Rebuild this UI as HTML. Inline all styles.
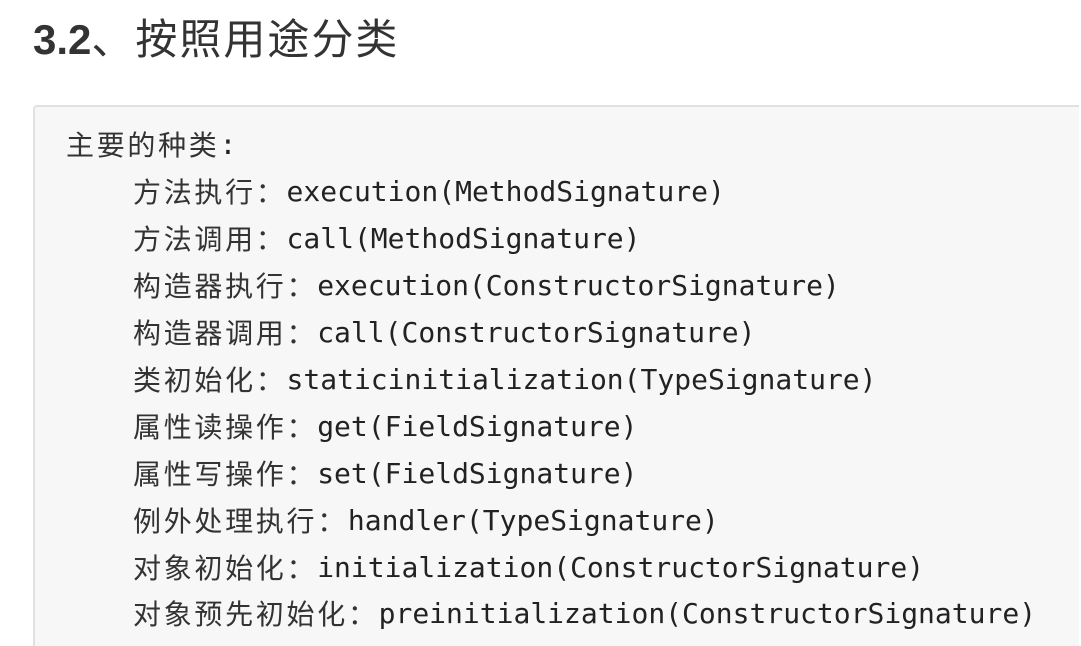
<html><head><style>
html,body{margin:0;width:1081px;height:646px;background:#fff;overflow:hidden;color:#333;font-family:"Liberation Sans","Noto Sans CJK SC",sans-serif}
h1{position:absolute;left:33px;top:14px;margin:0;font-size:42px;font-weight:normal;line-height:52px;white-space:nowrap}
h1 b{font-weight:bold;font-family:"Liberation Sans",sans-serif}
h1 span{letter-spacing:2px}
.box{position:absolute;left:33px;top:105px;width:1044px;height:539px;background:#f7f7f7;border:2px solid #e1e1e1;border-bottom:none;border-right:none;border-radius:4px 0 0 0}
.l{position:absolute;left:66px;height:47px;line-height:47px;font-family:"DejaVu Sans Mono","Liberation Mono",monospace;font-size:28px;color:#222;white-space:pre}
.l i{font-style:normal;font-family:"Noto Sans CJK SC",sans-serif;letter-spacing:2.7px;line-height:47px;vertical-align:top;color:#333}
.in{left:133px}
</style></head><body>
<h1><b>3.2</b><span>、按照用途分类</span></h1>
<div class="box"></div>
<div class="l" style="top:121px"><i>主要的种类</i>:</div>
<div class="l in" style="top:168px"><i>方法执行：</i>execution(MethodSignature)</div>
<div class="l in" style="top:215px"><i>方法调用：</i>call(MethodSignature)</div>
<div class="l in" style="top:262px"><i>构造器执行：</i>execution(ConstructorSignature)</div>
<div class="l in" style="top:309px"><i>构造器调用：</i>call(ConstructorSignature)</div>
<div class="l in" style="top:356px"><i>类初始化：</i>staticinitialization(TypeSignature)</div>
<div class="l in" style="top:403px"><i>属性读操作：</i>get(FieldSignature)</div>
<div class="l in" style="top:450px"><i>属性写操作：</i>set(FieldSignature)</div>
<div class="l in" style="top:497px"><i>例外处理执行：</i>handler(TypeSignature)</div>
<div class="l in" style="top:544px"><i>对象初始化：</i>initialization(ConstructorSignature)</div>
<div class="l in" style="top:590px"><i>对象预先初始化：</i>preinitialization(ConstructorSignature)</div>
</body></html>
